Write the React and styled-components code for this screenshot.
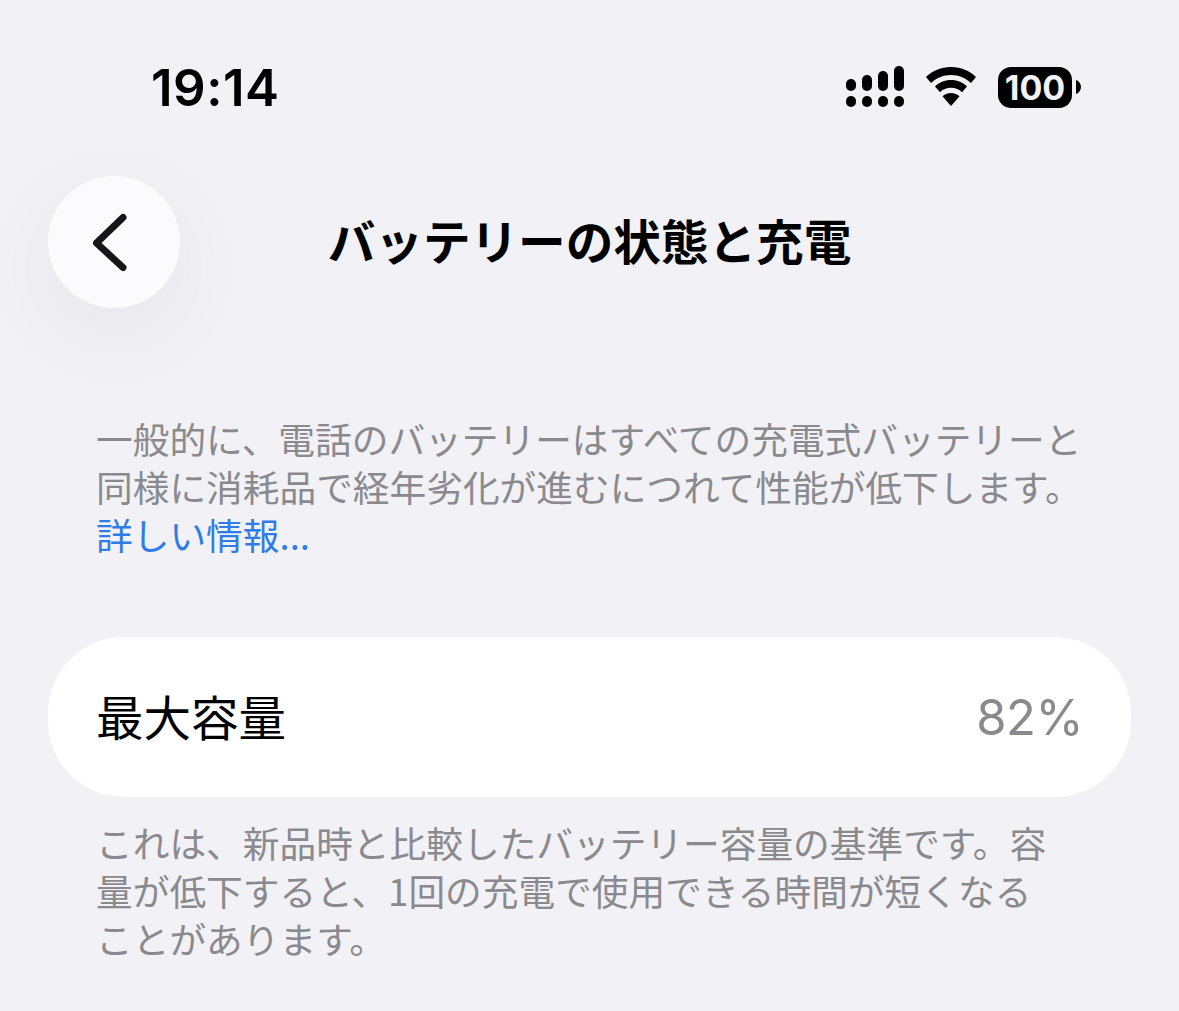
import React from "react";
import styled, { createGlobalStyle } from "styled-components";

const Global = createGlobalStyle`
  html, body { margin: 0; padding: 0; background: #f1f1f6; }
  body { font-family: "Inter", "Noto Sans CJK JP", sans-serif; }
`;
const JP = `"Noto Sans CJK JP", sans-serif`;
const Page = styled.div`
  width: 1179px; height: 1011px; overflow: hidden; background: #f1f1f6;
  display: flex; flex-direction: column; padding: 0 48px; box-sizing: border-box;
`;
const StatusBar = styled.div`
  height: 176px; flex: none; display: flex; justify-content: space-between; align-items: flex-start;
  padding: 60px 50px 0 103px; box-sizing: border-box;
`;
const Time = styled.div`
  font: 600 51px/55px "Inter", sans-serif; color: #000; letter-spacing: 0.5px;
`;
const StatusIcons = styled.div`
  display: flex; align-items: center; gap: 21px; margin-top: 6px; height: 42px;
`;
const Battery = styled.div`
  display: flex; align-items: center; gap: 4px;
`;
const BatteryBody = styled.div`
  width: 74px; height: 41px; border-radius: 13px; background: #000; color: #f1f1f6;
  font: 700 34px/41px "Inter", sans-serif; text-align: center;
`;
const NavBar = styled.div`
  height: 132px; flex: none; display: grid; grid-template-columns: 132px 1fr 132px; align-items: center;
`;
const BackButton = styled.div`
  width: 132px; height: 132px; border-radius: 50%; background: #fbfbfe;
  display: flex; align-items: center; justify-content: center;
  box-shadow: 0 24px 90px rgba(0,0,0,0.055);
`;
const Title = styled.div`
  font: 700 47.6px/56px ${JP}; color: #000; text-align: center; white-space: nowrap; padding-bottom: 4px;
`;
const Note = styled.div`
  font: 400 36.7px/48px ${JP}; color: #8a8a8e; padding: 0 48px; white-space: nowrap;
`;
const Intro = styled(Note)`
  margin-top: 106px;
`;
const MoreLink = styled.div`
  color: #2f7ce8;
`;
const Card = styled.div`
  height: 160px; margin-top: 79px; flex: none; border-radius: 76px; background: #fff;
  display: flex; align-items: center; justify-content: space-between; padding: 0 48px;
`;
const Label = styled.div`
  font: 400 47.5px/56px ${JP}; color: #000; padding-bottom: 3px;
`;
const Value = styled.div`
  font: 400 49px/56px "Inter", sans-serif; color: #8a8a8e; letter-spacing: -0.5px; padding-top: 1px;
`;
const Footer = styled(Note)`
  margin-top: 21px;
`;

const Signal = () => (
  <svg width="58" height="42" viewBox="0 0 58 42" fill="#000">
    <rect x="0" y="13" width="10" height="12" rx="5" />
    <rect x="16" y="9" width="10" height="16" rx="5" />
    <rect x="32" y="5" width="10" height="20" rx="5" />
    <rect x="48" y="0" width="10" height="25" rx="5" />
    <rect x="0" y="30" width="10" height="11" rx="5" />
    <rect x="16" y="30" width="10" height="11" rx="5" />
    <rect x="32" y="30" width="10" height="11" rx="5" />
    <rect x="48" y="30" width="10" height="11" rx="5" />
  </svg>
);
const Wifi = () => (
  <svg width="52" height="40" viewBox="0 0 52 40" fill="#000">
    <path d="M26 0C16 0 7.500 3.800 1 10l5 6c5.200-5 12-8 20-8s14.800 3 20 8l5-6C44.500 3.800 36 0 26 0z" />
    <path d="M26 13c-6.500 0-12 2.400-16 6.500l5 5.800c2.800-2.800 6.500-4.500 11-4.500s8.200 1.700 11 4.500l5-5.800C38 15.400 32.500 13 26 13z" />
    <path d="M26 26c-3.500 0-6.500 1.300-8.500 3.300L26 39l8.500-9.700C32.500 27.300 29.500 26 26 26z" />
  </svg>
);
const BatteryCap = () => (
  <svg width="5" height="14" viewBox="0 0 5 14" fill="#000">
    <path d="M0 0c3 1 5 4 5 7s-2 6-5 7z" />
  </svg>
);
const ChevronIcon = styled.svg`
  margin-right: 6px;
`;
const Chevron = () => (
  <ChevronIcon width="36" height="60" viewBox="0 0 36 60" fill="none" stroke="#15151a" strokeWidth="7" strokeLinecap="round" strokeLinejoin="round">
    <path d="M30 5.500 L3.500 31 L30 55.500" />
  </ChevronIcon>
);

export default function App() {
  return (
    <Page>
      <Global />
      <StatusBar>
        <Time>19:14</Time>
        <StatusIcons>
          <Signal />
          <Wifi />
          <Battery>
            <BatteryBody>100</BatteryBody>
            <BatteryCap />
          </Battery>
        </StatusIcons>
      </StatusBar>
      <NavBar>
        <BackButton><Chevron /></BackButton>
        <Title>バッテリーの状態と充電</Title>
        <span />
      </NavBar>
      <Intro>
        <div>一般的に、電話のバッテリーはすべての充電式バッテリーと</div>
        <div>同様に消耗品で経年劣化が進むにつれて性能が低下します。</div>
        <MoreLink>詳しい情報...</MoreLink>
      </Intro>
      <Card>
        <Label>最大容量</Label>
        <Value>82%</Value>
      </Card>
      <Footer>
        <div>これは、新品時と比較したバッテリー容量の基準です。容</div>
        <div>量が低下すると、1回の充電で使用できる時間が短くなる</div>
        <div>ことがあります。</div>
      </Footer>
    </Page>
  );
}
